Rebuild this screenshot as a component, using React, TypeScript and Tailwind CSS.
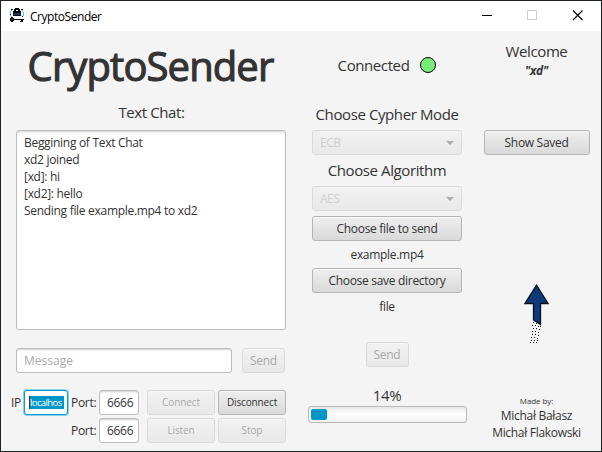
import type { ReactNode } from "react";

function Button({ children, className = "", disabled = false }: { children: ReactNode; className?: string; disabled?: boolean }) {
  return (
    <button
      disabled={disabled}
      className={`flex h-[25px] shrink-0 items-center justify-center rounded-[3px] border border-[#b5b5b5] bg-linear-to-b from-[#efefef] to-[#d9d9d9] whitespace-nowrap text-[#333] shadow-[inset_0_1px_0_#f8f8f8] disabled:opacity-40 ${className}`}
    >
      {children}
    </button>
  );
}

function Combo({ value }: { value: string }) {
  return (
    <div className="flex h-[25px] w-[150px] shrink-0 items-center justify-between rounded-[3px] border border-[#b5b5b5] bg-linear-to-b from-[#efefef] to-[#d9d9d9] px-[7px] opacity-40">
      <span className="tracking-[-0.5px] text-[#999]">{value}</span>
      <svg width="8" height="4" viewBox="0 0 8 4">
        <path d="M0 0h8L4 4z" fill="#444" />
      </svg>
    </div>
  );
}

function Field({ children, className = "" }: { children: ReactNode; className?: string }) {
  return (
    <div className={`flex h-[25px] shrink-0 items-center rounded-[3px] border border-[#bdbdbd] bg-white shadow-[inset_0_2px_2px_-1px_#ccc] ${className}`}>
      {children}
    </div>
  );
}

function AppIcon() {
  return (
    <svg width="16" height="16" viewBox="0 0 16 16" className="shrink-0" shapeRendering="crispEdges">
      <path d="M1 3h1v3H1zM2 2h1v1H2zM13 2h1v2h-1zM14 4h1v4h-1zM1 7h1v1H1zM2 8h1v1H2z" fill="#34d5ea" />
      <path d="M2 1h2v1H2zM12 1h2v1h-2zM13 8h1v1h-1zM1 6h1v1H1z" fill="#111" />
      <path d="M5 1h1V0h4v1h1v3H9V2H7v2H5z" fill="#000" />
      <path d="M4 3h8v5H4z" fill="#000" />
      <path d="M5 5h6v2H5z" fill="#123a70" />
      <path d="M2 9h2v1h1v1h10v1h-1v2h-3v-1h1v-1H5v1H4v1H2v-1H1v-3h1z" fill="#000" />
      <path d="M2 10h2v2H2z" fill="#123a70" />
    </svg>
  );
}

function Arrow() {
  return (
    <svg width="26" height="60" viewBox="0 0 26 60" className="shrink-0">
      <path d="M12.500 1.200L24 19.500h-7.500v21l-7-4.500V19.500H1z" fill="#0d3b7a" stroke="#0a0f1c" strokeWidth="1.300" />
      <path
        d="M9 38h1M12 39h1M8 41h1M11 41h1M14 42h1M9 44h1M12 44h1M15 45h1M8 47h1M11 47h1M14 48h1M8 50h1M11 50h1M14 51h1M7 53h1M10 53h1M13 54h1M7 56h1M10 56h1M13 56h1M6 58h1M9 58h1M12 58h1M16 42h1"
        stroke="#111"
        strokeWidth="1"
        shapeRendering="crispEdges"
        transform="translate(0 .5)"
      />
    </svg>
  );
}

export default function App() {
  return (
    <div className="flex h-[452px] w-[602px] flex-col overflow-hidden border border-[#202124] bg-[#f4f4f4] font-['Open_Sans','Noto_Sans',sans-serif] text-[12px] leading-[17px] tracking-[-0.3px] text-[#333]">
      <header className="flex h-[30px] shrink-0 items-center bg-white pl-2 text-black">
        <AppIcon />
        <span className="ml-[5px] tracking-[-0.45px]">CryptoSender</span>
        <svg className="ml-auto" width="130" height="30" viewBox="0 0 130 30" fill="none">
          <path d="M11 14.500h10" stroke="#000" />
          <path d="M56.500 9.500h9v9h-9z" stroke="#ccc" />
          <path d="M102 9.500l9.500 9.500M111.500 9.500L102 19" stroke="#000" strokeWidth="1.100" />
        </svg>
      </header>

      <main className="flex h-[420px] shrink-0">
        <section className="flex w-[301px] shrink-0 flex-col">
          <h1 className="flex h-[70px] w-[299px] items-center justify-center font-['Comic_Sans_MS','Open_Sans',sans-serif] text-[40px] leading-none tracking-[-0.9px] [-webkit-text-stroke:1.1px_#333]">
            CryptoSender
          </h1>
          <h2 className="flex h-[29px] w-[301px] items-start justify-center pt-[3px] text-[15px] tracking-[-0.4px]">Text Chat:</h2>
          <div className="ml-[15px] h-[200px] w-[270px] rounded-[3px] border border-[#bdbdbd] bg-white py-[3px] pl-[7px] shadow-[inset_0_3px_3px_-2px_#ccc]">
            <p>Beggining of Text Chat</p>
            <p>xd2 joined</p>
            <p>[xd]: hi</p>
            <p>[xd2]: hello</p>
            <p>Sending file example.mp4 to xd2</p>
          </div>
          <div className="mt-[18px] ml-[15px] flex gap-[10px]">
            <Field className="w-[216px] pl-[7px] text-[#aaa]">
              <span className="tracking-[0px]">Message</span>
            </Field>
            <Button disabled className="w-[43px]">Send</Button>
          </div>
          <div className="mt-[17px] ml-[10px] flex h-[25px] items-center">
            <span className="w-[13px]">IP</span>
            <div className="flex h-[25px] w-[44px] shrink-0 items-center rounded-[3px] border border-[#039ed3] bg-white pl-[4px] shadow-[0_0_0_1px_#8bd0e8]">
              <span className="h-[13px] w-[35px] border-l border-[#333] bg-[#0096c9] text-[9.5px] leading-[13px] tracking-[-0.6px] whitespace-nowrap text-white">localhos</span>
            </div>
            <span className="ml-[3px] w-[28px]">Port:</span>
            <Field className="w-[40px] pl-[7px]">6666</Field>
            <Button disabled className="ml-[8px] w-[68px] text-[10px] tracking-[-0.1px]">Connect</Button>
            <Button className="ml-[3px] w-[68px] text-[10px] tracking-[-0.15px]">Disconnect</Button>
          </div>
          <div className="mt-[3px] ml-[70px] flex h-[25px] items-center">
            <span className="w-[28px]">Port:</span>
            <Field className="w-[40px] pl-[7px]">6666</Field>
            <Button disabled className="ml-[8px] w-[68px] text-[10px] tracking-[-0.1px]">Listen</Button>
            <Button disabled className="ml-[3px] w-[68px] text-[10px] tracking-[-0.1px]">Stop</Button>
          </div>
        </section>

        <section className="flex w-[170px] shrink-0 flex-col items-center">
          <div className="mt-[24px] flex h-[20px] items-center gap-[11px] text-[15px] tracking-[-0.4px]">
            <span>Connected</span>
            <svg width="16" height="16" viewBox="0 0 16 16">
              <circle cx="8" cy="8" r="7.500" fill="#77ed77" stroke="#000" />
            </svg>
          </div>
          <h2 className="mt-[31px] h-[24px] text-[15px] leading-[17px] tracking-[-0.4px]">Choose Cypher Mode</h2>
          <Combo value="ECB" />
          <h2 className="flex h-[31px] items-center text-[15px] tracking-[-0.4px]">Choose Algorithm</h2>
          <Combo value="AES" />
          <Button className="mt-[5px] w-[150px]">Choose file to send</Button>
          <span className="flex h-[27px] items-center">example.mp4</span>
          <Button className="w-[150px]">Choose save directory</Button>
          <span className="flex h-[27px] items-center">file</span>
          <Button disabled className="mt-[22px] w-[43px]">Send</Button>
          <span className="mt-[18px] flex h-[21px] items-center pb-px text-[15px] leading-[20px] tracking-[-0.4px]">14%</span>
          <div className="ml-px h-[17px] w-[159px] rounded-[3px] border border-[#b9b9b9] bg-linear-to-b from-[#e8e8e8] via-white to-[#f0f0f0] p-[2px]">
            <div className="h-[11px] w-[16px] rounded-[2px] bg-[#0096c9]" />
          </div>
        </section>

        <section className="flex w-[129px] shrink-0 flex-col items-center">
          <span className="mt-[10px] h-[21px] text-[15px] leading-[20px] tracking-[-0.4px]">Welcome</span>
          <span className="h-[18px] font-bold italic">"xd"</span>
          <Button className="mt-[50px] w-[106px]">Show Saved</Button>
          <div className="mt-[129px] ml-px h-[60px]">
            <Arrow />
          </div>
          <span className="mt-[51px] h-[12px] text-[8px] leading-[12px] tracking-[-0.1px]">Made by:</span>
          <span>Michał Bałasz</span>
          <span>Michał Flakowski</span>
        </section>
      </main>
    </div>
  );
}
